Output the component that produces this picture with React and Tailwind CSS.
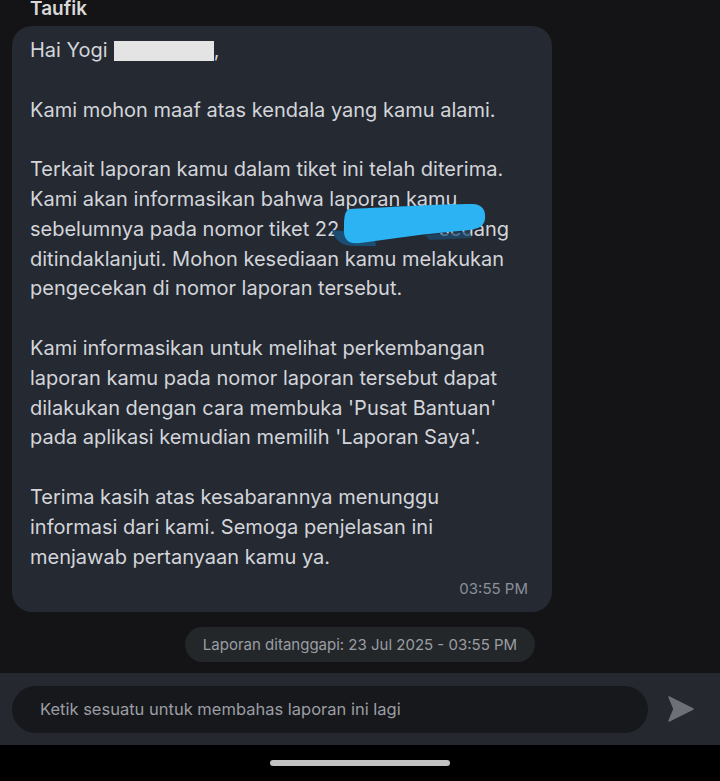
const paragraphs = [
  ['Kami mohon maaf atas kendala yang kamu alami.'],
  [
    'Terkait laporan kamu dalam tiket ini telah diterima.',
    'Kami akan informasikan bahwa laporan kamu',
    null,
    'ditindaklanjuti. Mohon kesediaan kamu melakukan',
    'pengecekan di nomor laporan tersebut.',
  ],
  [
    'Kami informasikan untuk melihat perkembangan',
    'laporan kamu pada nomor laporan tersebut dapat',
    "dilakukan dengan cara membuka 'Pusat Bantuan'",
    "pada aplikasi kemudian memilih 'Laporan Saya'.",
  ],
  [
    'Terima kasih atas kesabarannya menunggu',
    'informasi dari kami. Semoga penjelasan ini',
    'menjawab pertanyaan kamu ya.',
  ],
]

// the ticket number is scribbled over in the screenshot
function TicketLine() {
  return (
    <div className="relative whitespace-nowrap">
      sebelumnya pada nomor tiket 22<span className="inline-block w-[100px]"></span>sedang
      <svg className="absolute left-[300px] top-[-15px]" width="170" height="50" viewBox="0 0 170 50">
        <path d="M2 30 Q6 45 22 46 L46 46 L44 34 Z" fill="#1c4d72" />
        <path d="M95 35 L140 31 L142 38 L100 40 Z" fill="#1c4d72" opacity="0.7" />
        <path
          d="M20 9 C60 7 110 4 142 4 C153 4 156 11 155 19 C154 27 147 30 130 31 C100 33 60 39 30 43 C17 45 13 38 14 27 C14 16 15 10 20 9 Z"
          fill="#2bb3f3"
        />
      </svg>
    </div>
  )
}

export default function App() {
  return (
    <div
      className="w-[720px] h-[781px] overflow-hidden bg-[#141416] flex flex-col"
      style={{ fontFamily: 'Inter, "Noto Sans", sans-serif' }}
    >
      <div className="flex-1 flex flex-col">
        <div className="pl-[30px] mt-[-4px] h-[30px] text-[19px] font-semibold leading-[26px] text-[#d9d9d9]">Taufik</div>

        <div className="ml-3 w-[540px] rounded-[20px] bg-[#252932] pl-[18px] pr-6 pt-[10px] pb-[13px] text-[20px] leading-[29.8px] text-[#d3d5da]">
          <div className="flex items-center">
            Hai Yogi
            <span className="ml-[6px] inline-block w-[100px] h-[20px] bg-[#e4e4e4]"></span>
            ,
          </div>
          {paragraphs.map((p, i) => (
            <div key={i} className="mt-[29.8px]">
              {p.map((line, j) => (line === null ? <TicketLine key={j} /> : <div key={j} className="whitespace-nowrap">{line}</div>))}
            </div>
          ))}
          <div className="mt-[7px] text-right text-[15px] leading-5 text-[#8b9099]">03:55 PM</div>
        </div>

        <div className="mt-[15px] self-center w-[350px] h-[35px] rounded-full bg-[#24272a] flex items-center justify-center text-[15px] text-[#9a9da3]">
          Laporan ditanggapi: 23 Jul 2025 - 03:55 PM
        </div>
      </div>

      <div className="h-[72px] bg-[#25282e] flex items-center pl-3 pr-[26px] gap-5">
        <div className="flex-1 h-[47px] rounded-full bg-[#17181c] flex items-center pl-7 text-[16.5px] text-[#9b9ea4]">
          Ketik sesuatu untuk membahas laporan ini lagi
        </div>
        <svg width="26" height="26" viewBox="0 0 26 26">
          <path d="M1 1 L25 13 L1 25 L6 13 Z" fill="#6d7077" strokeLinejoin="round" stroke="#6d7077" strokeWidth="1.5" />
        </svg>
      </div>

      <div className="h-[36px] bg-black flex items-center justify-center">
        <div className="w-[180px] h-[6px] rounded-full bg-[#c2c2c2]"></div>
      </div>
    </div>
  )
}
